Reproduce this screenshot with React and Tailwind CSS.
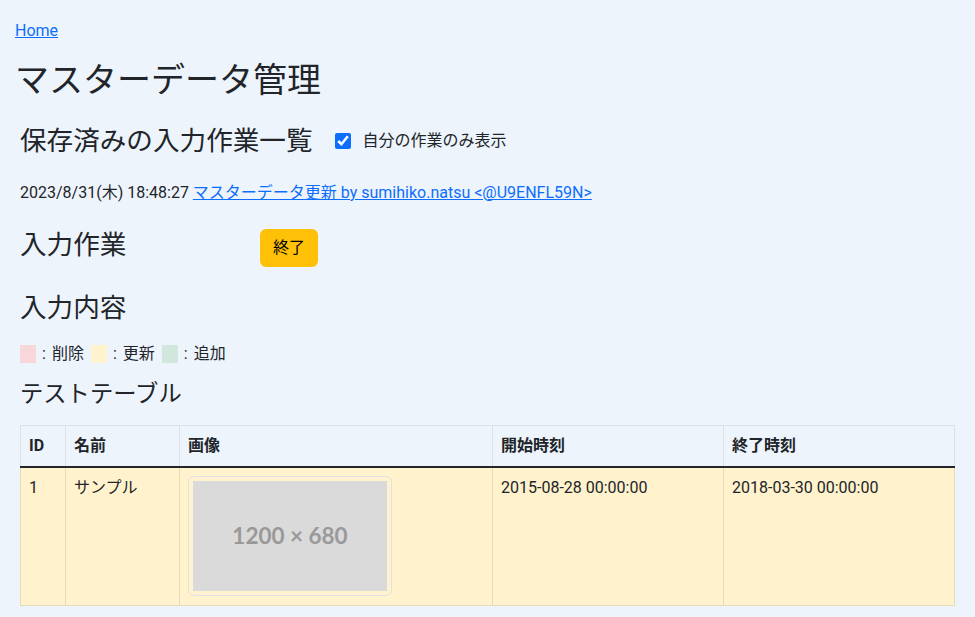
import React, { useState } from 'react';

const font = { fontFamily: 'Roboto, "Noto Sans CJK JP", sans-serif' };

function Legend({ color, label }) {
  return (
    <span className="inline-flex items-center">
      <span className={`inline-block w-4 h-[18px] ${color}`}></span>
      <span className="ml-[6px]">:</span>
      <span className="ml-[6px] mr-[7px]">{label}</span>
    </span>
  );
}

function App() {
  const [mine, setMine] = useState(true);

  return (
    <div className="min-h-screen bg-[#eef4fc] text-[#212529] text-base" style={font}>
      <div className="px-[15px] pt-[19px]">
        <a href="#" className="text-[#0d6efd] underline leading-6">Home</a>
        <h1 className="mt-[17px] text-[34px] leading-[1.2] font-normal">マスターデータ管理</h1>
      </div>

      <div className="px-5">
        <div className="mt-[24px] flex items-center">
          <h3 className="text-[26.6px] leading-[1.2]">保存済みの入力作業一覧</h3>
          <label className="ml-[22px] flex items-center gap-3 text-base">
            <input
              type="checkbox"
              checked={mine}
              onChange={(e) => setMine(e.target.checked)}
              className="w-4 h-4 accent-[#0d6efd]"
            />
            自分の作業のみ表示
          </label>
        </div>

        <p className="mt-[24px] leading-6">
          2023/8/31(木) 18:48:27{' '}
          <a href="#" className="text-[#0d6efd] underline">マスターデータ更新 by sumihiko.natsu &lt;@U9ENFL59N&gt;</a>
        </p>

        <div className="mt-[24px] flex items-start">
          <h3 className="w-[240px] text-[26.6px] leading-[1.2]">入力作業</h3>
          <button className="h-[38px] px-[13px] rounded-md bg-[#ffc107] text-black">終了</button>
        </div>

        <h3 className="mt-[25px] text-[26.6px] leading-[1.2]">入力内容</h3>

        <div className="mt-[18px] flex items-center leading-6">
          <Legend color="bg-[#f8d7da]" label="削除" />
          <Legend color="bg-[#fff3cd]" label="更新" />
          <Legend color="bg-[#d1e7dd]" label="追加" />
        </div>

        <h4 className="mt-[15px] text-[23.3px] leading-[1.2]">テストテーブル</h4>

        <table className="mt-[16px] w-full border-collapse table-fixed">
          <thead>
            <tr className="font-bold text-left">
              <th className="w-[45px] px-2 py-2 border border-[#dee2e6] border-b-2 border-b-[#212529]">ID</th>
              <th className="w-[114px] px-2 py-2 border border-[#dee2e6] border-b-2 border-b-[#212529]">名前</th>
              <th className="w-[313px] px-2 py-2 border border-[#dee2e6] border-b-2 border-b-[#212529]">画像</th>
              <th className="w-[231px] px-2 py-2 border border-[#dee2e6] border-b-2 border-b-[#212529]">開始時刻</th>
              <th className="px-2 py-2 border border-[#dee2e6] border-b-2 border-b-[#212529]">終了時刻</th>
            </tr>
          </thead>
          <tbody>
            <tr className="bg-[#fff2cc] align-top">
              <td className="px-2 py-2 border border-[#e6dbb9]">1</td>
              <td className="px-2 py-2 border border-[#e6dbb9]">サンプル</td>
              <td className="px-2 pt-2 pb-[9px] border border-[#e6dbb9]">
                <div className="w-[204px] p-1 border border-[#dee2e6] rounded-md">
                  <div
                    className="w-[194px] h-[110px] bg-[#dadada] flex items-center justify-center text-[22.5px] font-bold text-[#999]"
                    style={{ fontFamily: 'Lato, sans-serif' }}
                  >
                    1200 × 680
                  </div>
                </div>
              </td>
              <td className="px-2 py-2 border border-[#e6dbb9]">2015-08-28 00:00:00</td>
              <td className="px-2 py-2 border border-[#e6dbb9]">2018-03-30 00:00:00</td>
            </tr>
          </tbody>
        </table>
      </div>
    </div>
  );
}

export default App;
